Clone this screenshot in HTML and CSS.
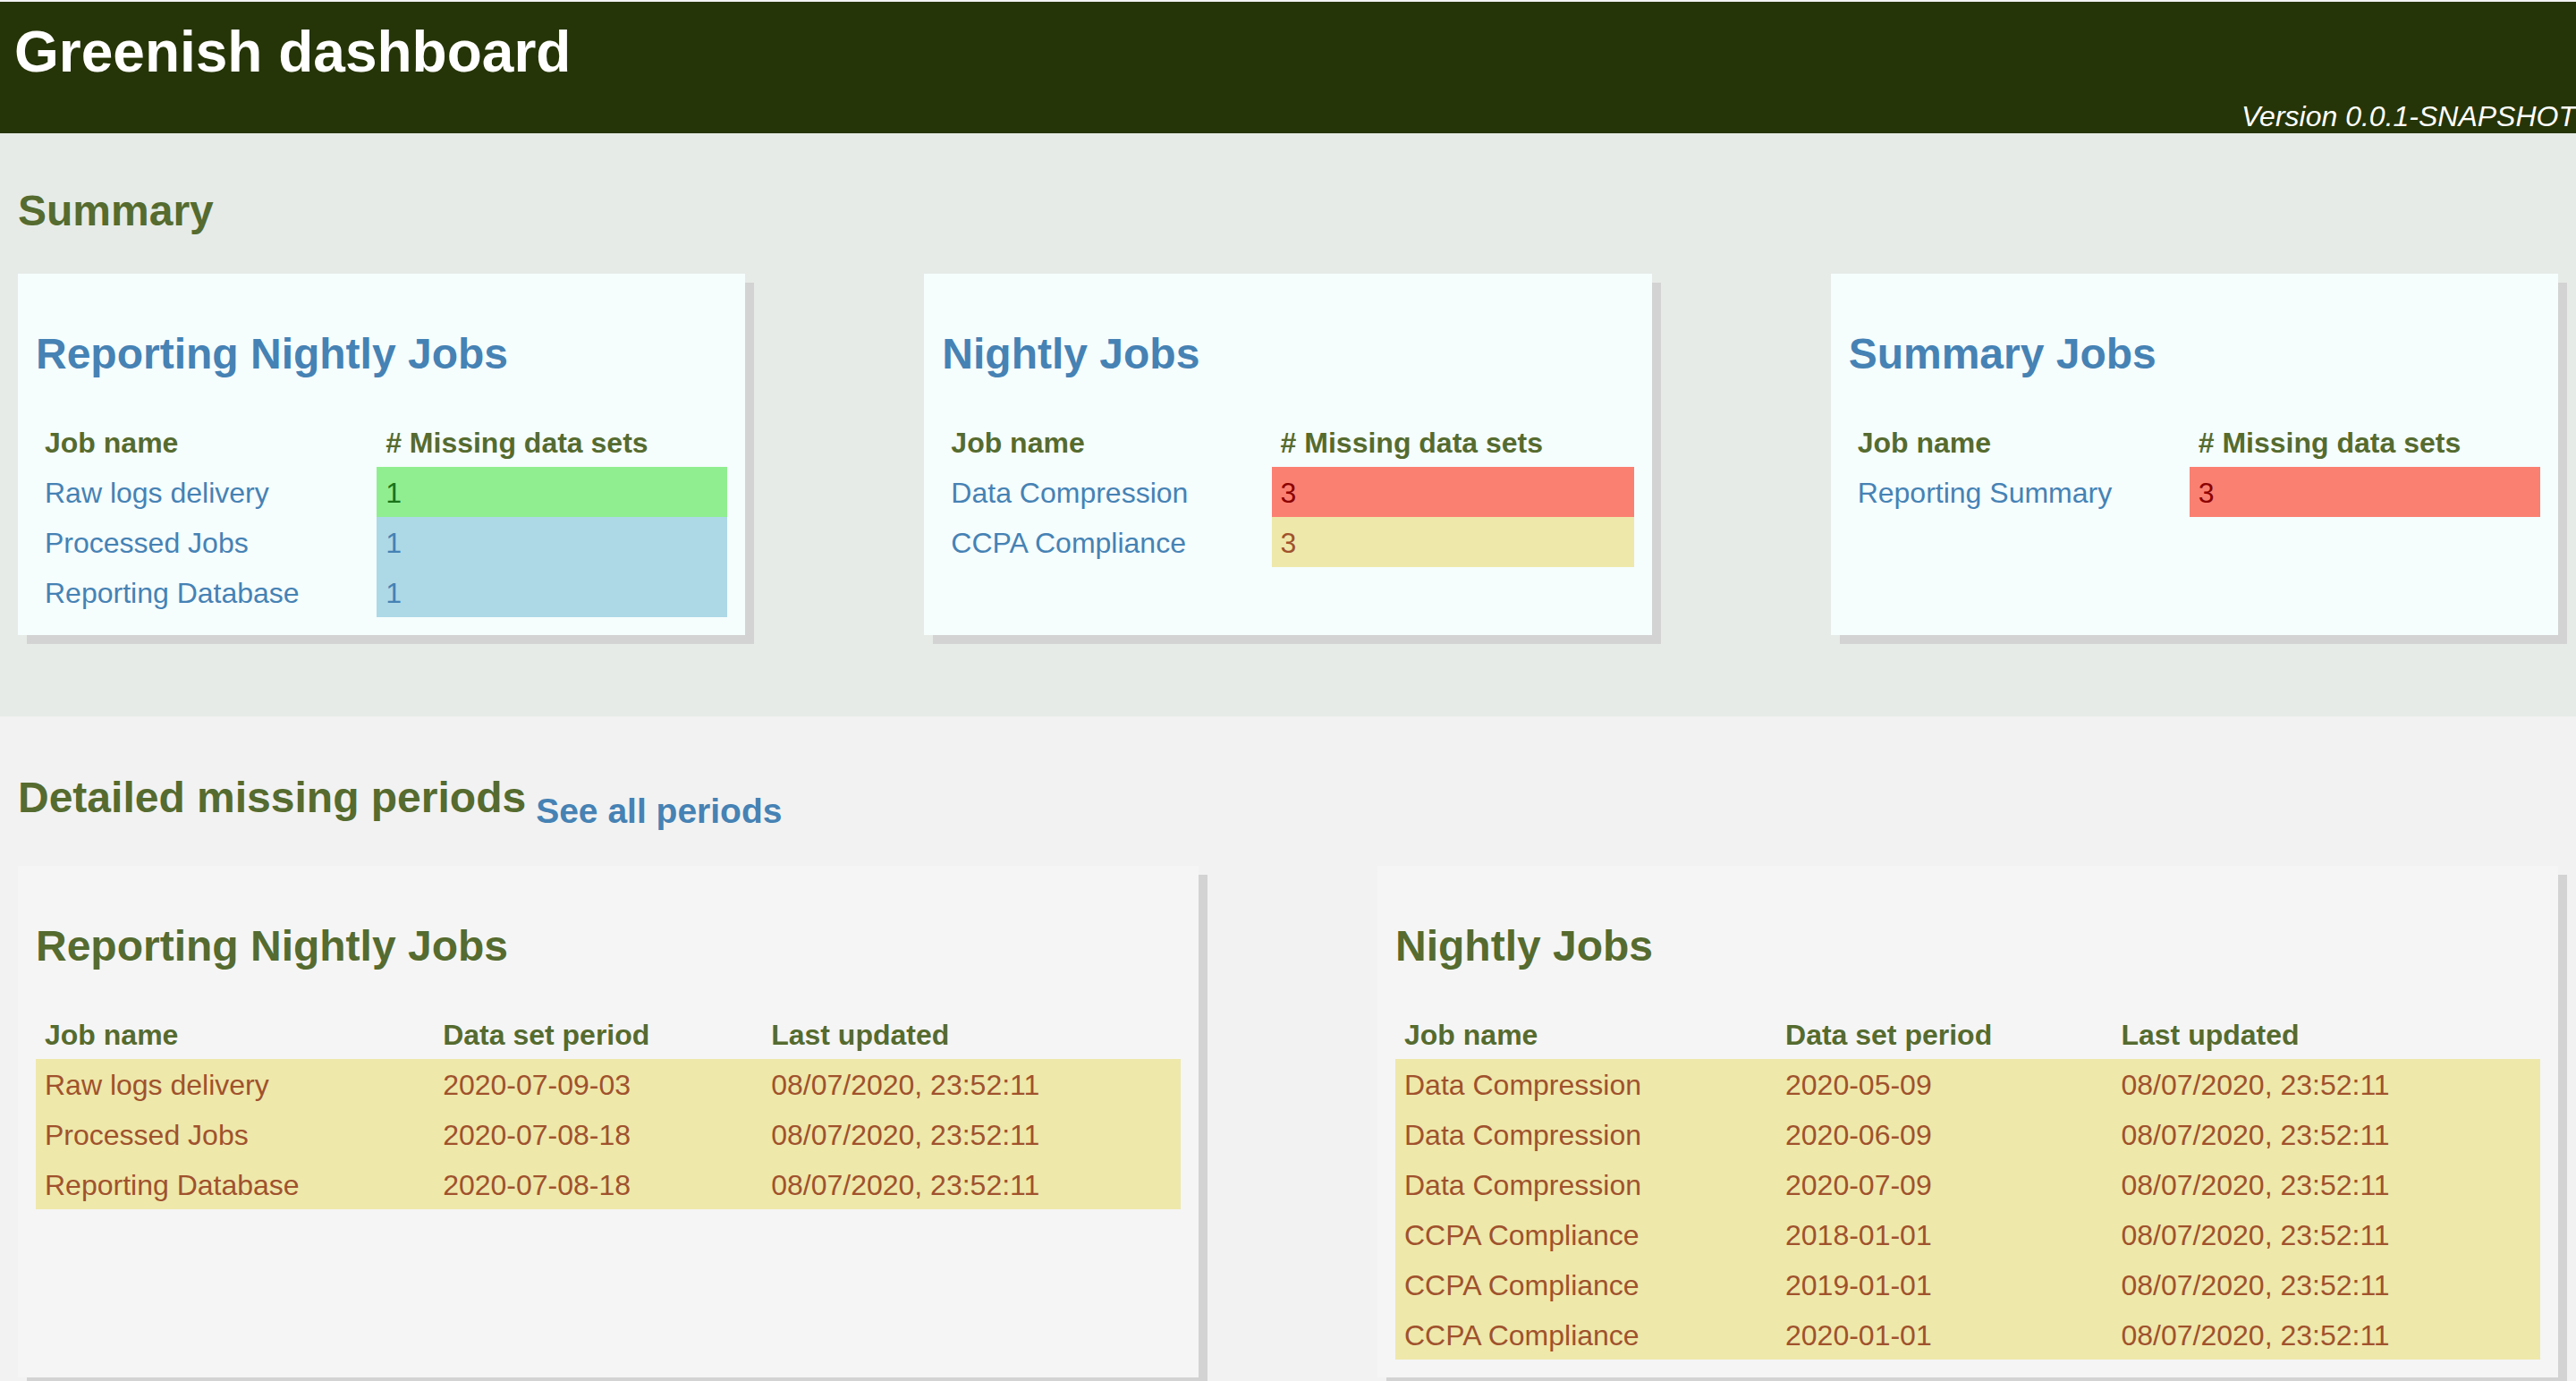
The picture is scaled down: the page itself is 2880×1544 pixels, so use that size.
FILE: index.html
```html
<!DOCTYPE html>
<html lang="en">
<head>
<meta charset="utf-8">
<title>Greenish dashboard</title>
<link rel="stylesheet" href="styles.css">
</head>
<body>
<header class="topbar">
  <h1 class="title">Greenish dashboard</h1>
  <div class="version">Version 0.0.1-SNAPSHOT</div>
</header>

<section class="summary">
  <h2 class="section-title">Summary</h2>
  <div class="cards">
    <div class="card card-summary">
      <h3 class="card-title">Reporting Nightly Jobs</h3>
      <table class="jobs">
        <thead><tr><th>Job name</th><th># Missing data sets</th></tr></thead>
        <tbody>
          <tr><td><a class="job-link">Raw logs delivery</a></td><td class="cell-ok">1</td></tr>
          <tr><td><a class="job-link">Processed Jobs</a></td><td class="cell-info">1</td></tr>
          <tr><td><a class="job-link">Reporting Database</a></td><td class="cell-info">1</td></tr>
        </tbody>
      </table>
    </div>
    <div class="card card-summary">
      <h3 class="card-title">Nightly Jobs</h3>
      <table class="jobs">
        <thead><tr><th>Job name</th><th># Missing data sets</th></tr></thead>
        <tbody>
          <tr><td><a class="job-link">Data Compression</a></td><td class="cell-bad">3</td></tr>
          <tr><td><a class="job-link">CCPA Compliance</a></td><td class="cell-warn">3</td></tr>
        </tbody>
      </table>
    </div>
    <div class="card card-summary">
      <h3 class="card-title">Summary Jobs</h3>
      <table class="jobs">
        <thead><tr><th>Job name</th><th># Missing data sets</th></tr></thead>
        <tbody>
          <tr><td><a class="job-link">Reporting Summary</a></td><td class="cell-bad">3</td></tr>
        </tbody>
      </table>
    </div>
  </div>
</section>

<section class="detail">
  <div class="detail-head">
    <h2 class="section-title head-inline">Detailed missing periods</h2>
    <a class="see-all">See all periods</a>
  </div>
  <div class="cards">
    <div class="card card-detail">
      <h3 class="card-title">Reporting Nightly Jobs</h3>
      <table class="jobs">
        <thead><tr><th>Job name</th><th>Data set period</th><th>Last updated</th></tr></thead>
        <tbody class="rows-warn">
          <tr><td>Raw logs delivery</td><td>2020-07-09-03</td><td>08/07/2020, 23:52:11</td></tr>
          <tr><td>Processed Jobs</td><td>2020-07-08-18</td><td>08/07/2020, 23:52:11</td></tr>
          <tr><td>Reporting Database</td><td>2020-07-08-18</td><td>08/07/2020, 23:52:11</td></tr>
        </tbody>
      </table>
    </div>
    <div class="card card-detail">
      <h3 class="card-title">Nightly Jobs</h3>
      <table class="jobs">
        <thead><tr><th>Job name</th><th>Data set period</th><th>Last updated</th></tr></thead>
        <tbody class="rows-warn">
          <tr><td>Data Compression</td><td>2020-05-09</td><td>08/07/2020, 23:52:11</td></tr>
          <tr><td>Data Compression</td><td>2020-06-09</td><td>08/07/2020, 23:52:11</td></tr>
          <tr><td>Data Compression</td><td>2020-07-09</td><td>08/07/2020, 23:52:11</td></tr>
          <tr><td>CCPA Compliance</td><td>2018-01-01</td><td>08/07/2020, 23:52:11</td></tr>
          <tr><td>CCPA Compliance</td><td>2019-01-01</td><td>08/07/2020, 23:52:11</td></tr>
          <tr><td>CCPA Compliance</td><td>2020-01-01</td><td>08/07/2020, 23:52:11</td></tr>
        </tbody>
      </table>
    </div>
  </div>
</section>
</body>
</html>
```

FILE: styles.css
```css
html, body {
  margin: 0;
  padding: 0;
}

body {
  font-family: "Liberation Sans", Arial, Helvetica, sans-serif;
  background: #f2f2f2;
  padding-top: 2px;
}

.topbar {
  background: #263507;
  color: #ffffff;
  padding: 20px 0 0 16px;
}

.title {
  margin: 0;
  font-size: 64px;
  line-height: 72px;
  font-weight: bold;
}

.version {
  margin-top: 18px;
  font-size: 32px;
  line-height: 37px;
  font-style: italic;
  text-align: right;
}

.summary {
  display: flow-root;
  background: #e6ebe7;
  padding: 0 20px 91px;
}

.detail {
  display: flow-root;
  background: #f2f2f2;
  padding: 0 20px 60px;
}

.section-title {
  font-size: 48px;
  line-height: 55px;
  font-weight: bold;
  color: #556b2f;
  margin: 59px 0 43px;
}

.detail-head {
  display: flex;
  align-items: flex-start;
  gap: 11px;
  margin: 63px 0 39px;
}

.head-inline {
  margin: 0;
}

.see-all {
  margin-top: 20px;
  font-size: 39px;
  line-height: 45px;
  font-weight: bold;
  color: #4682b4;
  text-decoration: none;
}

.cards {
  display: flex;
  gap: 200px;
  align-items: stretch;
}

.card {
  flex: 1 1 0;
  min-width: 0;
  padding: 20px;
  box-shadow: 10px 10px 0 #d3d3d3;
}

.card-summary {
  background: #f5fdfd;
}

.card-detail {
  background: #f5f5f5;
}

.card-title {
  font-size: 48px;
  line-height: 55px;
  font-weight: bold;
  margin: 42px 0 43px;
}

.card-summary .card-title {
  color: #4682b4;
}

.card-detail .card-title {
  color: #556b2f;
}

.jobs {
  width: 100%;
  border-collapse: collapse;
  font-size: 32px;
}

.jobs th,
.jobs td {
  padding: 10px 10px 8px;
  line-height: 38px;
  text-align: left;
  white-space: nowrap;
}

.jobs th {
  color: #556b2f;
  font-weight: bold;
}

.job-link {
  color: #4682b4;
  text-decoration: none;
}

.cell-ok {
  background: #90ee90;
  color: #1a741a;
}

.cell-info {
  background: #add8e6;
  color: #4682b4;
}

.cell-bad {
  background: #fa8072;
  color: #8b0000;
}

.cell-warn {
  background: #eee8aa;
  color: #a0522d;
}

.rows-warn td {
  background: #eee8aa;
  color: #a0522d;
}
```
